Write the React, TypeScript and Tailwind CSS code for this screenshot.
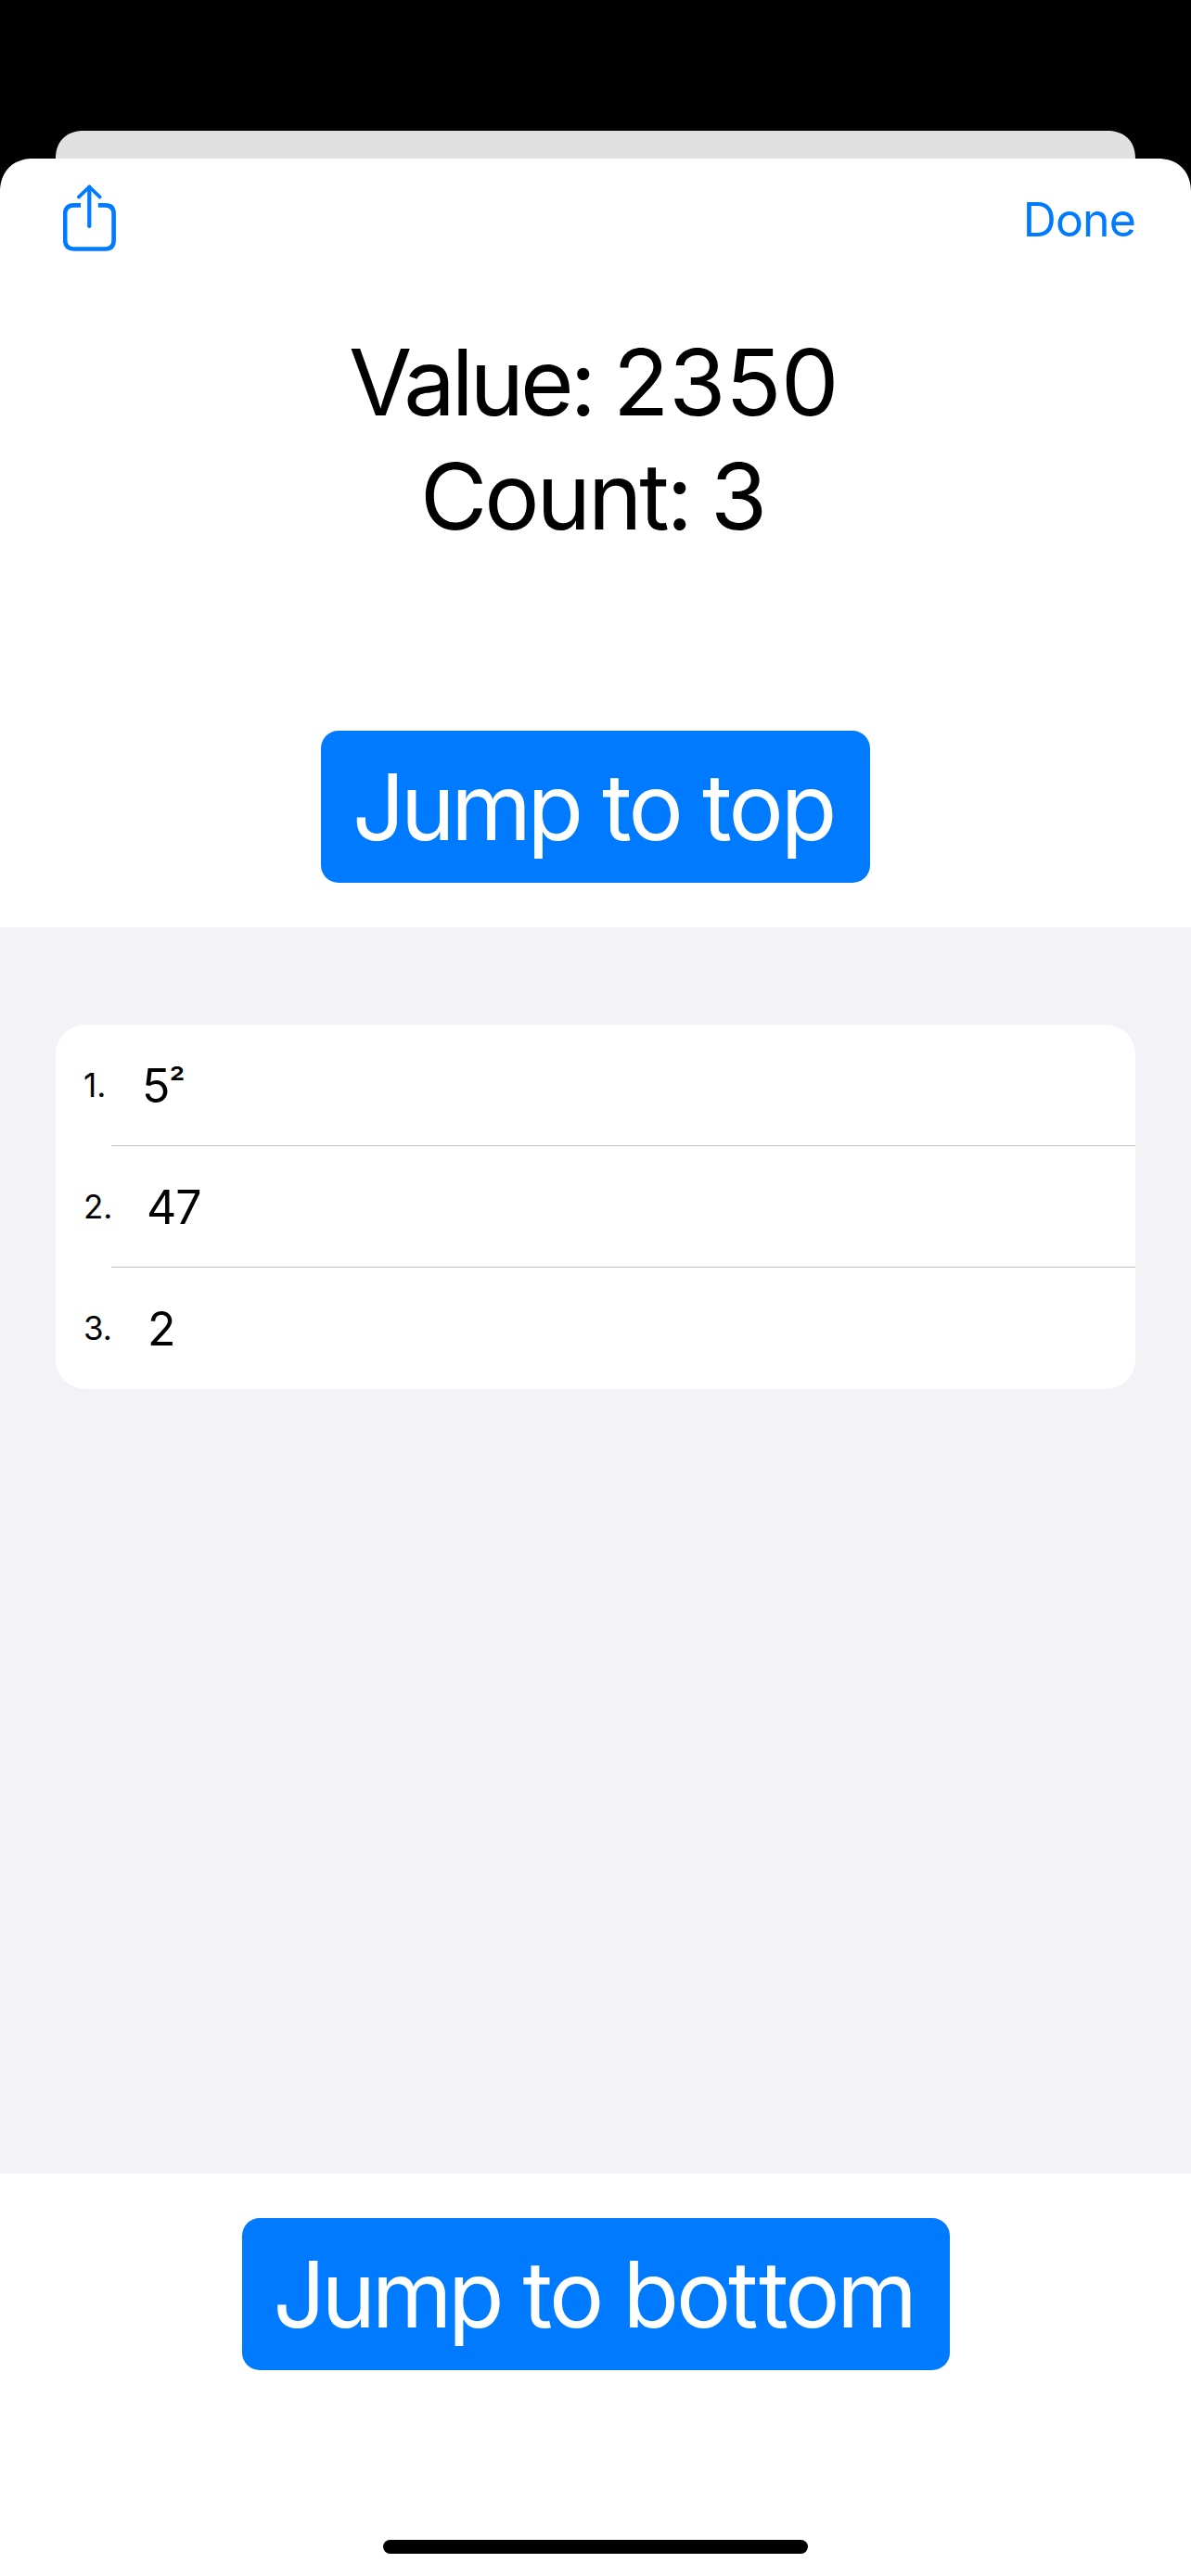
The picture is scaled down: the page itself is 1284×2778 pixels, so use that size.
const items = [
  { label: "1.", base: "5", power: "²", offset: "ml-[63px]" },
  { label: "2.", base: "47", power: "", offset: "ml-[68px]" },
  { label: "3.", base: "2", power: "", offset: "ml-[69px]" },
];

function ShareIcon() {
  return (
    <svg width="58" height="74" viewBox="0 0 58 74" fill="none" stroke="currentColor" strokeWidth="4.6">
      <path d="M19 22.4H11.5Q2.2 22.4 2.2 31.5V60Q2.2 69.5 11.5 69.5H45.5Q54.6 69.5 54.6 60V31.5Q54.6 22.4 45.5 22.4H37.8" />
      <path d="M28.3 45V2.5" strokeWidth="4.2" strokeLinecap="round" />
      <path d="M17 13.4L28.3 2.5L39.6 13.4" strokeWidth="3.8" strokeLinecap="round" strokeLinejoin="round" />
    </svg>
  );
}

export default function App() {
  return (
    <div className="flex h-[2778px] w-[1284px] flex-col overflow-hidden bg-black pt-[141px] font-['Inter',sans-serif] text-black [font-variant-ligatures:none]">
      <div className="mx-[60px] h-[30px] shrink-0 rounded-t-[32px] bg-[#e0e0e0] [corner-shape:superellipse(1.15)]" />
      <div className="flex flex-1 flex-col rounded-t-[36px] bg-white [corner-shape:superellipse(1.15)]">
        <header className="flex h-[132px] items-start justify-between pl-[68px] pr-[60px] text-[#007aff]">
          <button className="mt-[28px]" aria-label="Share">
            <ShareIcon />
          </button>
          <button className="mt-[36px] text-[50px] leading-[60px] tracking-[-0.9px]">Done</button>
        </header>

        <div className="mt-[48px] text-[99px] leading-[123px]">
          <p className="flex whitespace-pre pl-[376px]">
            <span className="w-[285px] tracking-[-4.1px]">Value: </span>
            <span className="tracking-[-0.2px]">2350</span>
          </p>
          <p className="flex whitespace-pre pl-[453px]">
            <span className="w-[313px] tracking-[-3.1px]">Count: </span>
            <span>3</span>
          </p>
        </div>

        <button className="mx-auto mt-[191px] flex h-[164px] w-[592px] shrink-0 whitespace-pre rounded-[19px] bg-[#007aff] pl-[34px] text-[99px] leading-[164px] text-white">
          <span className="w-[269px] text-left tracking-[-4.4px]">Jump </span>
          <span className="w-[108px] text-left tracking-[-3px]">to </span>
          <span className="text-left tracking-[-3px]">top</span>
        </button>

        <section className="mt-[48px] h-[1344px] shrink-0 bg-[#f2f2f7] px-[60px] pt-[105px]">
          <ol className="h-[393px] overflow-hidden rounded-[32px] bg-white">
            {items.map((item, i) => (
              <li key={item.label} className="flex h-[131px] flex-col">
                <div className="flex flex-1 items-baseline pl-[30px] pt-[36px]">
                  <span className="relative top-[-6px] w-0 text-[35px]">{item.label}</span>
                  <span className={`${item.offset} text-[50px] leading-[60px] tracking-[-1px]`}>
                    {item.base}
                    {item.power && (
                      <span className="relative top-[-7px] text-[38px] font-medium leading-none">{item.power}</span>
                    )}
                  </span>
                </div>
                {i < 2 && <div className="ml-[60px] h-px shrink-0 bg-[#c5c5c7]" />}
              </li>
            ))}
          </ol>
        </section>

        <button className="mx-auto mt-[48px] flex h-[164px] w-[763px] shrink-0 whitespace-pre rounded-[19px] bg-[#007aff] pl-[34px] text-[99px] leading-[164px] text-white">
          <span className="w-[269px] text-left tracking-[-4.4px]">Jump </span>
          <span className="w-[108px] text-left tracking-[-3px]">to </span>
          <span className="text-left tracking-[-3.2px]">
            bo<span className="tracking-[0.5px]">t</span>tom
          </span>
        </button>
        <div className="mx-auto mb-[24px] mt-auto h-[15px] w-[458px] rounded-full bg-black" />
      </div>
    </div>
  );
}
